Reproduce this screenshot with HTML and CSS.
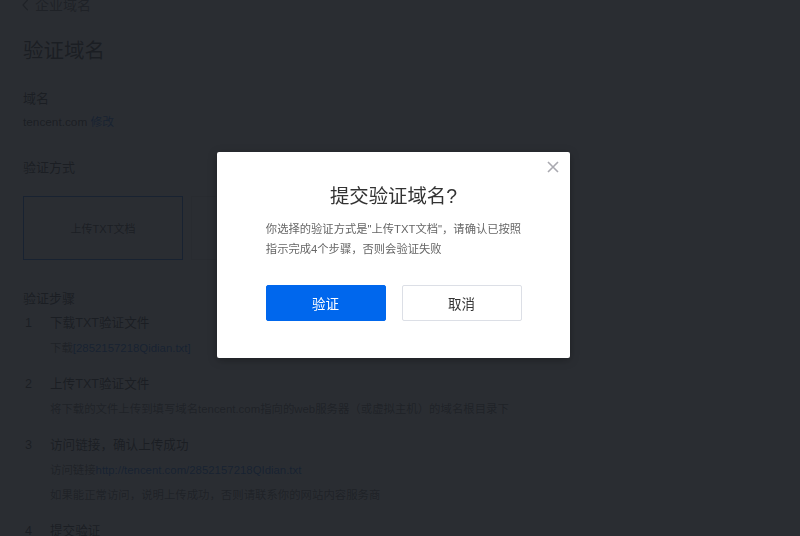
FILE: index.html
```html
<!DOCTYPE html>
<html lang="zh-CN">
<head>
<meta charset="utf-8">
<title>验证域名</title>
<link rel="stylesheet" href="styles.css">
</head>
<body>
<div class="page">
  <div class="crumb">
    <svg class="crumb-icon" width="7" height="12" viewBox="0 0 7 12"><path d="M5.8 0.8 L1 6 L5.8 11.2" fill="none" stroke="currentColor" stroke-width="1.3"/></svg>
    <span>企业域名</span>
  </div>
  <h1 class="title">验证域名</h1>

  <div class="label label-first">域名</div>
  <div class="domain">tencent.com <a class="link">修改</a></div>

  <div class="label label-method">验证方式</div>
  <div class="options">
    <div class="option option-active">上传TXT文档</div>
    <div class="option">添加DNS解析记录</div>
  </div>

  <div class="label label-steps">验证步骤</div>
  <ol class="steps">
    <li class="step">
      <div class="step-head"><span class="num">1</span><span>下载TXT验证文件</span></div>
      <div class="step-sub">下载<a class="link">[2852157218Qidian.txt]</a></div>
    </li>
    <li class="step">
      <div class="step-head"><span class="num">2</span><span>上传TXT验证文件</span></div>
      <div class="step-sub">将下载的文件上传到填写域名tencent.com指向的web服务器（或虚拟主机）的域名根目录下</div>
    </li>
    <li class="step">
      <div class="step-head"><span class="num">3</span><span>访问链接，确认上传成功</span></div>
      <div class="step-sub">访问链接<a class="link">http://tencent.com/2852157218QIdian.txt</a></div>
      <div class="step-sub">如果能正常访问，说明上传成功，否则请联系你的网站内容服务商</div>
    </li>
    <li class="step">
      <div class="step-head"><span class="num">4</span><span>提交验证</span></div>
    </li>
  </ol>
</div>

<div class="overlay">
  <div class="modal">
    <button class="close" aria-label="关闭">
      <svg width="12" height="12" viewBox="0 0 12 12"><path d="M1 1 L11 11 M11 1 L1 11" stroke="currentColor" stroke-width="1.6" fill="none"/></svg>
    </button>
    <h2 class="modal-title">提交验证域名?</h2>
    <div class="modal-body">
      <p class="modal-desc">你选择的验证方式是"上传TXT文档"，请确认已按照<br>指示完成4个步骤，否则会验证失败</p>
    </div>
    <div class="modal-actions">
      <button class="btn btn-primary">验证</button>
      <button class="btn btn-default">取消</button>
    </div>
  </div>
</div>
</body>
</html>
```

FILE: styles.css
```css
html, body {
  margin: 0;
  padding: 0;
  height: 100%;
  overflow: hidden;
}

body {
  background: #ffffff;
  color: #333333;
  font-family: "Liberation Sans", "Noto Sans CJK SC", sans-serif;
  font-size: 14px;
}

.page {
  margin-top: -5px;
  padding-left: 23px;
}

.crumb {
  display: flex;
  align-items: center;
  gap: 6px;
  height: 20px;
  color: #666666;
  font-size: 14px;
  line-height: 20px;
}

.crumb-icon {
  display: block;
  margin-left: -1px;
}

.title {
  margin: 22px 0 0;
  font-size: 20.5px;
  font-weight: normal;
  line-height: 28px;
  color: #333333;
}

.label {
  font-size: 13px;
  line-height: 20px;
  color: #333333;
}

.label-first { margin-top: 24px; }
.label-method { margin-top: 26px; }
.label-steps { margin-top: 29px; }

.domain {
  margin-top: 3px;
  font-size: 11.8px;
  line-height: 20px;
  color: #333333;
}

.link {
  color: #0067ed;
  text-decoration: none;
}

.options {
  display: flex;
  gap: 8px;
  margin-top: 18px;
}

.option {
  box-sizing: border-box;
  width: 160px;
  height: 64px;
  display: flex;
  align-items: center;
  justify-content: center;
  border: 1px solid #e3e3e3;
  font-size: 11px;
  color: #333333;
}

.option-active {
  border-color: #0067ed;
}

.steps {
  list-style: none;
  margin: 4px 0 0;
  padding: 0;
  display: flex;
  flex-direction: column;
  gap: 16px;
}

.step-head {
  display: flex;
  font-size: 12.6px;
  line-height: 20px;
  color: #333333;
}

.num {
  width: 25px;
  padding-left: 2px;
}

.step-sub {
  margin-top: 5px;
  padding-left: 27px;
  font-size: 11.4px;
  line-height: 20px;
  color: #666666;
}

/* overlay + modal */
.overlay {
  position: fixed;
  inset: 0;
  background: rgba(26, 29, 34, 0.93);
  display: flex;
  justify-content: center;
  align-items: flex-start;
  padding: 152px 13px 0 0;
}

.modal {
  position: relative;
  box-sizing: border-box;
  width: 353px;
  height: 206px;
  background: #ffffff;
  border-radius: 2px;
  box-shadow: 0 2px 10px rgba(0, 0, 0, 0.3);
  padding: 30px 0 0;
  display: flex;
  flex-direction: column;
  align-items: center;
}

.close {
  position: absolute;
  top: 3px;
  right: 5px;
  width: 24px;
  height: 24px;
  padding: 0;
  border: 0;
  background: transparent;
  color: #a9a9b0;
  display: flex;
  align-items: center;
  justify-content: center;
}

.modal-title {
  margin: 0;
  font-size: 19.4px;
  font-weight: normal;
  line-height: 28px;
  color: #333333;
}

.modal-body {
  margin-top: 10px;
  text-align: center;
}

.modal-desc {
  display: inline-block;
  margin: 0;
  text-align: left;
  white-space: nowrap;
  font-size: 11.3px;
  line-height: 19.5px;
  color: #666666;
}

.modal-actions {
  display: flex;
  gap: 16px;
  margin-top: 26px;
}

.btn {
  box-sizing: border-box;
  width: 120px;
  height: 36px;
  border-radius: 2px;
  font-family: "Liberation Sans", "Noto Sans CJK SC", sans-serif;
  font-size: 13.5px;
  cursor: pointer;
}

.btn-primary {
  background: #0067ed;
  border: 1px solid #0067ed;
  color: #ffffff;
}

.btn-default {
  background: #ffffff;
  border: 1px solid #dcdfe6;
  color: #333333;
}
```
